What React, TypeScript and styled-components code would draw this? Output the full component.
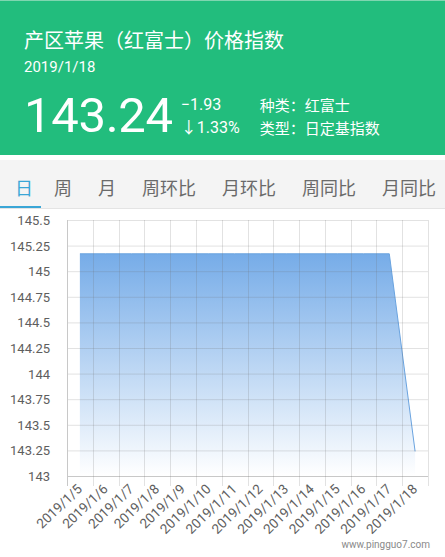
import styled, { createGlobalStyle } from "styled-components";

const GlobalStyle = createGlobalStyle`
  html, body {
    margin: 0;
    padding: 0;
    background: #ffffff;
  }
  body {
    font-family: Roboto, "Noto Sans CJK SC", sans-serif;
  }
`;

const Page = styled.div`
  width: 445px;
  height: 557px;
  overflow: hidden;
  background: #ffffff;
`;

const Header = styled.div`
  height: 155px;
  box-sizing: border-box;
  padding: 25px 24px 0;
  background: #22bd7d;
  border-top: 1px solid #7fd6b0;
  color: #ffffff;
`;

const Title = styled.div`
  font-family: "Noto Sans CJK SC", sans-serif;
  font-size: 20px;
  line-height: 28px;
`;

const DateLine = styled.div`
  font-size: 15px;
  line-height: 20px;
  margin-top: 3px;
`;

const PriceRow = styled.div`
  display: flex;
  align-items: flex-start;
  margin-top: 14px;
`;

const Price = styled.div`
  font-size: 49px;
  line-height: 1;
  letter-spacing: -0.3px;
`;

const Change = styled.div`
  display: flex;
  flex-direction: column;
  margin-left: 8px;
  font-size: 16px;
  line-height: 23px;
  margin-top: 2px;
`;

const Meta = styled.div`
  display: flex;
  flex-direction: column;
  margin-left: 20px;
  font-family: "Noto Sans CJK SC", sans-serif;
  font-size: 15px;
  line-height: 23px;
  margin-top: 2px;
`;

const TabBar = styled.div`
  display: flex;
  margin-top: 5px;
  height: 49px;
  box-sizing: border-box;
  padding-top: 8px;
  background: #f4f4f4;
  border-bottom: 1px solid #e4e4e4;
  overflow: hidden;
`;

const Tab = styled.div<{ $active?: boolean }>`
  flex-shrink: 0;
  white-space: nowrap;
  padding: 0 13px;
  height: 38px;
  line-height: 38px;
  font-family: "Noto Sans CJK SC", sans-serif;
  font-size: 18px;
  color: ${(p) => (p.$active ? "#3aa6d6" : "#6a6a6a")};
  border-bottom: 3px solid ${(p) => (p.$active ? "#3aa6d6" : "transparent")};
  &:first-child {
    padding-left: 15px;
    padding-right: 8px;
  }
`;

const ChartBox = styled.div`
  height: 347px;
`;

const tabs = ["日", "周", "月", "周环比", "月环比", "周同比", "月同比"];

const dates = [5, 6, 7, 8, 9, 10, 11, 12, 13, 14, 15, 16, 17, 18].map((d) => `2019/1/${d}`);
const values = [145.17, 145.17, 145.17, 145.17, 145.17, 145.17, 145.17, 145.17, 145.17, 145.17, 145.17, 145.17, 145.17, 143.24];
const yTicks = ["145.5", "145.25", "145", "144.75", "144.5", "144.25", "144", "143.75", "143.5", "143.25", "143"];

// chart coords are relative to the top of the chart box (page y 210)
const X0 = 67;
const X1 = 428;
const Y0 = 11;
const Y1 = 267;
const cw = (X1 - X0) / dates.length;
const yOf = (v: number) => Y1 - ((v - 143) / 2.5) * (Y1 - Y0);
const xOf = (i: number) => X0 + (i + 0.5) * cw;

const PriceChart = () => {
  const pts = values.map((v, i) => `${xOf(i).toFixed(1)},${yOf(v).toFixed(1)}`);
  const area = `M${xOf(0)},${Y1} L${pts.join(" L")} L${xOf(values.length - 1)},${Y1} Z`;
  const line = `M${pts.join(" L")}`;
  return (
    <svg width="445" height="347" viewBox="0 0 445 347">
      <defs>
        <linearGradient id="fillGrad" x1="0" y1="0" x2="0" y2="1">
          <stop offset="0" stopColor="#76ace8" />
          <stop offset="1" stopColor="#ffffff" />
        </linearGradient>
      </defs>
      <path d={area} fill="url(#fillGrad)" />
      <path d={line} fill="none" stroke="#6aa3df" strokeWidth="1" />
      {yTicks.map((t, j) => {
        const y = Y0 + (j * (Y1 - Y0)) / 10 + 0.5;
        return (
          <g key={t}>
            <line x1={X0} x2={X1} y1={y} y2={y} stroke={j === 10 ? "#c8c8c8" : "rgba(110,110,110,0.2)"} />
            <text x="50" y={y + 4.5} textAnchor="end" fontSize="13" fill="#5e5e5e" fontFamily="Roboto, sans-serif">
              {t}
            </text>
          </g>
        );
      })}
      {Array.from({ length: dates.length + 1 }).map((_, i) => {
        const x = Math.round(X0 + i * cw) + 0.5;
        return <line key={i} x1={x} x2={x} y1={Y0} y2={Y1 + 10} stroke={i === 0 ? "#c8c8c8" : "rgba(110,110,110,0.2)"} />;
      })}
      {dates.map((d, i) => (
        <text
          key={d}
          x={xOf(i) + 3}
          y={Y1 + 14}
          textAnchor="end"
          fontSize="13.5"
          fill="#5e5e5e"
          fontFamily="Roboto, sans-serif"
          transform={`rotate(-44 ${xOf(i) + 3} ${Y1 + 14})`}
        >
          {d}
        </text>
      ))}
      <text x="430" y="339" textAnchor="end" fontSize="10" fill="#8a8a8a" fontFamily="Roboto, sans-serif">
        www.pingguo7.com
      </text>
    </svg>
  );
};

export default function App() {
  return (
    <Page>
      <GlobalStyle />
      <Header>
        <Title>产区苹果（红富士）价格指数</Title>
        <DateLine>2019/1/18</DateLine>
        <PriceRow>
          <Price>143.24</Price>
          <Change>
            <span>−1.93</span>
            <span>↓1.33%</span>
          </Change>
          <Meta>
            <span>种类：红富士</span>
            <span>类型：日定基指数</span>
          </Meta>
        </PriceRow>
      </Header>
      <TabBar>
        {tabs.map((t, i) => (
          <Tab key={t} $active={i === 0}>
            {t}
          </Tab>
        ))}
      </TabBar>
      <ChartBox>
        <PriceChart />
      </ChartBox>
    </Page>
  );
}
